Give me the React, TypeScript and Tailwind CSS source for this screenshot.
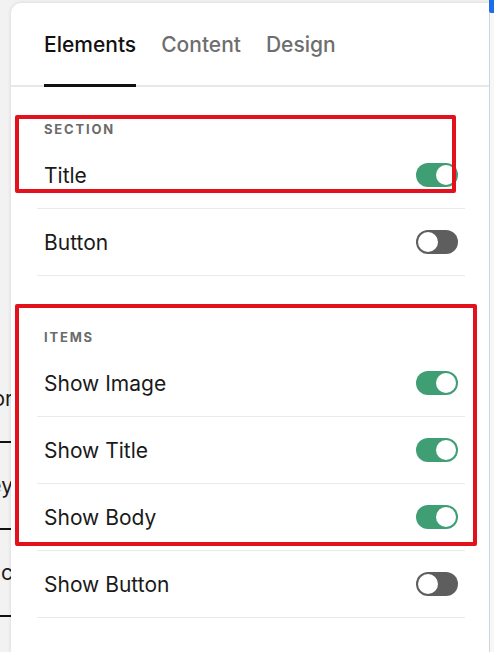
import { useState } from 'react'

type Row = { id: string; label: string; on: boolean }

const sectionRows: Row[] = [
  { id: 'title', label: 'Title', on: true },
  { id: 'button', label: 'Button', on: false },
]

const itemRows: Row[] = [
  { id: 'image', label: 'Show Image', on: true },
  { id: 'itemTitle', label: 'Show Title', on: true },
  { id: 'body', label: 'Show Body', on: true },
  { id: 'itemButton', label: 'Show Button', on: false },
]

function Toggle({ on, onClick }: { on: boolean; onClick: () => void }) {
  return (
    <button
      onClick={onClick}
      className={`w-[42px] h-[24px] rounded-full flex items-center px-[2px] shrink-0 ${
        on ? 'bg-[#3f9e74] justify-end' : 'bg-[#5e5e5e] justify-start'
      }`}
    >
      <span className="w-[20px] h-[20px] rounded-full bg-white" />
    </button>
  )
}

function SettingRow({ row, onToggle }: { row: Row; onToggle: () => void }) {
  return (
    <div className="h-[67px] border-b border-[#eaeaea] px-[7px] flex items-center justify-between">
      <span className="pt-[2px] text-[21px] text-[#1a1a1a]">{row.label}</span>
      <Toggle on={row.on} onClick={onToggle} />
    </div>
  )
}

export default function App() {
  const [tab, setTab] = useState('Elements')
  const [section, setSection] = useState(sectionRows)
  const [items, setItems] = useState(itemRows)

  function flip(list: Row[], set: (r: Row[]) => void, id: string) {
    set(list.map((r) => (r.id === id ? { ...r, on: !r.on } : r)))
  }

  return (
    <div className="relative w-[494px] h-[652px] overflow-hidden bg-[#f2f2f2] flex font-['Inter',sans-serif]">
      {/* page behind the panel */}
      <div className="w-[11px] shrink-0 overflow-hidden pt-[387px] text-[21px] text-[#1a1a1a]">
        {['Color', 'Key', 'Sync'].map((w) => (
          <div key={w} className="mb-[31px]">
            <div className="h-[24px] leading-[24px] whitespace-nowrap flex justify-end -mr-[2px]">{w}</div>
            <div className="mt-[30px] h-[2px] bg-[#111]" />
          </div>
        ))}
      </div>

      {/* panel */}
      <div className="mt-[3px] w-[478px] shrink-0 bg-white rounded-tl-[10px] shadow-[0_0_4px_rgba(0,0,0,0.12)] flex flex-col">
        <div className="h-[84px] border-b-2 border-[#e8e8e8] px-[33px] flex gap-[25px]">
          {['Elements', 'Content', 'Design'].map((t) => (
            <button
              key={t}
              onClick={() => setTab(t)}
              className={`-mb-[2px] pt-[3px] border-b-[3px] flex items-center text-[21px] font-medium ${
                tab === t ? 'border-[#111] text-[#111]' : 'border-transparent text-[#6e6e6e]'
              }`}
            >
              {t}
            </button>
          ))}
        </div>

        <div className="pl-[26px] pr-[24px]">
          <div className="mt-[35px] mb-[6px] px-[7px] text-[13px] leading-[14px] font-bold tracking-[0.14em] text-[#6b6b6b]">SECTION</div>
          {section.map((r) => (
            <SettingRow key={r.id} row={r} onToggle={() => flip(section, setSection, r.id)} />
          ))}

          <div className="mt-[54px] mb-[6px] px-[7px] text-[13px] leading-[14px] font-bold tracking-[0.14em] text-[#6b6b6b]">ITEMS</div>
          {items.map((r) => (
            <SettingRow key={r.id} row={r} onToggle={() => flip(items, setItems, r.id)} />
          ))}
        </div>
      </div>

      {/* right edge */}
      <div className="w-[5px] shrink-0 border-l border-[#cdd5df] bg-[#f7f7f7]">
        <div className="h-[13px] -ml-px bg-[#1a6fe8] rounded-bl-[2px]" />
      </div>

      {/* annotation boxes */}
      <div className="absolute left-[15px] top-[115px] w-[441px] h-[78px] border-4 border-[#e3111b] rounded-[2px] pointer-events-none" />
      <div className="absolute left-[15px] top-[304px] w-[462px] h-[242px] border-4 border-[#e3111b] rounded-[2px] pointer-events-none" />
    </div>
  )
}
